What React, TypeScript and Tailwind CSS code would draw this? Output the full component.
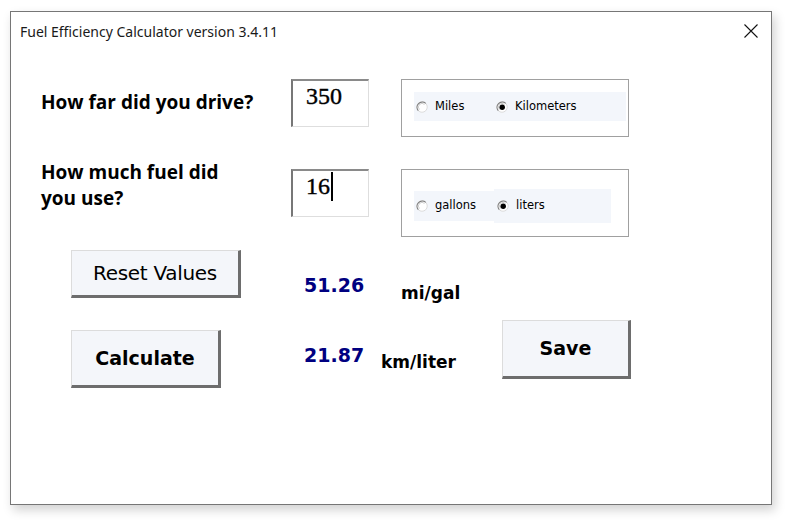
import React from 'react';

const Radio = ({ checked }: { checked?: boolean }) => (
  <svg width="12" height="12" viewBox="0 0 24 24" className="shrink-0">
    <circle cx="12" cy="12" r="10.5" fill="#ffffff" stroke="#dcdcdc" strokeWidth="2" />
    <path d="M4.6 19.4 A10.5 10.5 0 0 1 19.4 4.6" fill="none" stroke="#7c7c7c" strokeWidth="2.2" />
    <path d="M7 17 A7 7 0 0 1 17 7" fill="none" stroke="#c4c4c4" strokeWidth="1.6" />
    {checked && <circle cx="12.4" cy="12.4" r="5.4" fill="#000000" />}
  </svg>
);

const TextBox = ({ value, caret }: { value: string; caret?: boolean }) => (
  <div className="shrink-0 w-[78px] h-[48px] bg-white border-t-2 border-l-2 border-t-[#8a8a8a] border-l-[#777777] border-r border-b border-r-[#dedede] border-b-[#dedede] pl-[13px] pt-[1px]">
    <div
      className="flex items-center h-[28px] text-[24px] leading-[28px] text-black [-webkit-text-stroke:0.4px_black]"
      style={{ fontFamily: '"Liberation Serif", serif' }}
    >
      {value}
      {caret && <span className="inline-block w-[2px] h-[29px] bg-black ml-[1px]" />}
    </div>
  </div>
);

const btnBase =
  'shrink-0 bg-[#f4f6fa] border-t border-l border-t-[#dcdcdc] border-l-[#dcdcdc] border-r-[3px] border-b-[3px] border-r-[#6d6d6d] border-b-[#6d6d6d] flex items-center justify-center text-black';

export default function App() {
  const label = { fontFamily: '"Open Sans", Lato, sans-serif' };
  const tahoma = { fontFamily: '"DejaVu Sans", Verdana, sans-serif' };

  return (
    <div className="w-[788px] h-[520px] bg-white overflow-hidden pt-[11px] pl-[10px]">
      <div className="w-[762px] h-[494px] bg-white border border-[#767676] shadow-[3px_5px_10px_rgba(0,0,0,0.18)] flex flex-col">
        {/* title bar */}
        <div className="h-[38px] flex items-center justify-between pl-[9px] pr-[13px]">
          <span className="text-[14px] text-[#1a1a1a]" style={{ fontFamily: '"Noto Sans", sans-serif' }}>
            Fuel Efficiency Calculator version 3.4.11
          </span>
          <svg width="14" height="14" viewBox="0 0 14 14">
            <path d="M0.5 0.5 L13.5 13.5 M13.5 0.5 L0.5 13.5" stroke="#111111" strokeWidth="1.1" />
          </svg>
        </div>

        {/* distance row */}
        <div className="flex items-start mt-[29px] pl-[30px]">
          <div className="w-[250px] shrink-0 pt-[11px] text-[19px] leading-[24px] font-bold text-black" style={label}>
            How far did you drive?
          </div>
          <TextBox value="350" />
          <div className="ml-[32px] w-[228px] h-[58px] border border-[#a0a0a0] shrink-0">
            <div className="ml-[12px] mt-[12px] w-[212px] h-[29px] bg-[#f3f6fb] flex items-center pl-[2px] text-[11.5px] text-black" style={tahoma}>
              <div className="w-[80px] flex items-center gap-[7px]">
                <Radio />
                <span>Miles</span>
              </div>
              <div className="flex items-center gap-[7px]">
                <Radio checked />
                <span>Kilometers</span>
              </div>
            </div>
          </div>
        </div>

        {/* fuel row */}
        <div className="flex items-start mt-[22px] pl-[30px]">
          <div className="w-[250px] shrink-0 text-[19px] leading-[26px] font-bold text-black" style={label}>
            How much fuel did
            <br />
            you use?
          </div>
          <div className="mt-[10px]">
            <TextBox value="16" caret />
          </div>
          <div className="ml-[32px] mt-[10px] w-[228px] h-[68px] border border-[#a0a0a0] shrink-0">
            <div className="ml-[12px] mt-[19px] h-[34px] flex items-center text-[11.5px] text-black" style={tahoma}>
              <div className="w-[80px] h-[30px] bg-[#f3f6fb] flex items-center gap-[7px] pl-[2px]">
                <Radio />
                <span>gallons</span>
              </div>
              <div className="w-[117px] h-[34px] bg-[#f3f6fb] flex items-center gap-[7px] pl-[3px]">
                <Radio checked />
                <span>liters</span>
              </div>
            </div>
          </div>
        </div>

        {/* reset row */}
        <div className="flex items-start h-[48px] mt-[13px] pl-[60px]">
          <div className={`${btnBase} w-[170px] h-[48px] text-[20px] tracking-[-0.3px]`} style={tahoma}>
            Reset Values
          </div>
          <div className="ml-[63px] mt-[23px] w-[97px] shrink-0 text-[19px] leading-[24px] font-bold text-[#000080]" style={tahoma}>
            51.26
          </div>
          <div className="mt-[31px] text-[17px] leading-[24px] font-bold text-black" style={tahoma}>
            mi/gal
          </div>
        </div>

        {/* calculate row */}
        <div className="flex items-start mt-[22px] pl-[60px]">
          <div className={`${btnBase} mt-[10px] w-[150px] h-[58px] text-[19px] font-bold`} style={tahoma}>
            Calculate
          </div>
          <div className="ml-[83px] mt-[23px] w-[77px] shrink-0 text-[19px] leading-[24px] font-bold text-[#000080]" style={tahoma}>
            21.87
          </div>
          <div className="mt-[30px] w-[121px] shrink-0 text-[17px] leading-[24px] font-bold text-black" style={tahoma}>
            km/liter
          </div>
          <div className={`${btnBase} w-[129px] h-[59px] text-[19px] font-bold`} style={tahoma}>
            Save
          </div>
        </div>
      </div>
    </div>
  );
}
